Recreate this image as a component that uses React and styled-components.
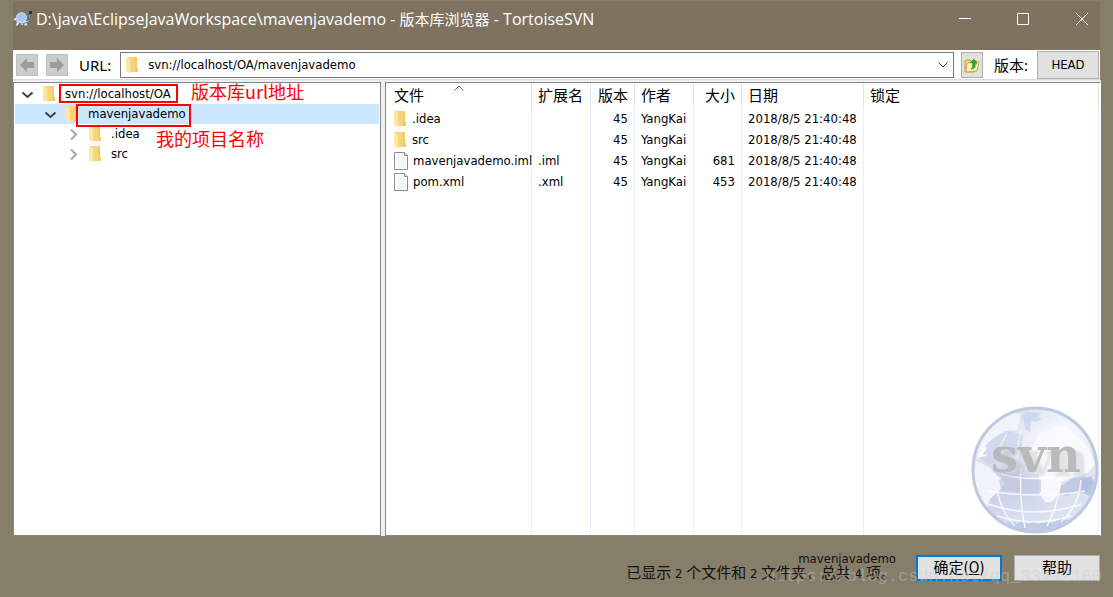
import React from "react";
import styled, { createGlobalStyle, css } from "styled-components";

const GlobalStyle = createGlobalStyle`
  * {
    box-sizing: border-box;
  }

  body {
    margin: 0;
    background: #877e6a;
    color: #000;
    font: 13px/20px "DejaVu Sans Condensed", "Noto Sans CJK SC", sans-serif;
  }

  button,
  input {
    margin: 0;
    padding: 0;
    font: inherit;
    color: inherit;
  }

  svg {
    display: block;
    flex: none;
  }
`;

const Window = styled.div`
  position: relative;
  display: flex;
  flex-direction: column;
  min-height: 100vh;
  padding: 1px 12px 0 13px;
`;

const TitleBar = styled.header`
  display: flex;
  align-items: flex-start;
  height: 49px;
  margin-right: 1px;
  background: #7f735f;
  color: #fff;
`;

const Title = styled.h1`
  display: flex;
  align-items: center;
  flex: 1;
  gap: 4px;
  height: 36px;
  margin: 0;
  font: 400 16px/20px "Open Sans", "Noto Sans CJK SC", sans-serif;
  white-space: nowrap;
`;

const TitleCjk = styled.span`
  font-size: 15px;
`;

const WindowButton = styled.button`
  display: flex;
  align-items: center;
  justify-content: center;
  width: 58px;
  height: 36px;
  border: 0;
  background: none;

  &:last-child {
    width: 48px;
    padding-left: 12px;
  }
`;

const Toolbar = styled.div`
  display: flex;
  align-items: center;
  height: 30px;
  margin-right: 1px;
  padding: 0 1px 0 3px;
  border-bottom: 1px solid #dcdcdc;
  background: #fff;
`;

const BigLabel = styled.label`
  font: 15px/20px "Noto Sans", "Noto Sans CJK SC", sans-serif;
  white-space: nowrap;
`;

const ToolButton = styled.button`
  display: flex;
  align-items: center;
  justify-content: center;
  width: 22px;
  height: ${(p) => p.$height || 22}px;
  border: 1px solid ${(p) => (p.disabled ? "#bfbfbf" : "#adadad")};
  background: ${(p) => (p.disabled ? "#ccc" : "#e1e1e1")};
`;

const NavButtons = styled.div`
  display: flex;
  gap: 8px;
  margin-right: 11px;
`;

const ComboBox = styled.div`
  display: flex;
  align-items: center;
  flex: 1;
  height: 26px;
  margin: 0 7px 0 9px;
  padding: 0 5px;
  border: 1px solid #7a7a7a;
  background: #fff;
`;

const UrlInput = styled.input`
  flex: 1;
  min-width: 0;
  margin-left: 8px;
  border: 0;
  outline: 0;
  background: none;
`;

const DropButton = styled.button`
  border: 0;
  background: none;
`;

const Revision = styled.div`
  display: flex;
  align-items: center;
  gap: 9px;
  margin-left: 11px;
`;

const PushButton = styled.button`
  width: ${(p) => p.$width}px;
  height: ${(p) => p.$height}px;
  border: 1px solid #adadad;
  background: #e1e1e1;
  font-size: ${(p) => (p.$large ? 15 : 13)}px;

  ${(p) =>
    p.$primary &&
    css`
      border: 2px solid #0078d7;
    `}
`;

const Panes = styled.main`
  display: grid;
  grid-template-columns: 368px 1fr;
  gap: 4px;
  flex: 1;
  padding-top: 2px;
  background: #f0eff0;
`;

const Pane = styled.section`
  position: relative;
  display: grid;
  align-content: ${(p) => (p.$stretch ? "stretch" : "start")};
  border: 1px solid #828790;
  border-right-color: ${(p) => (p.$stretch ? "#fff" : "#828790")};
  background: #fff;
`;

const Tree = styled.ul`
  margin: 0;
  padding: 1px;
  list-style: none;
`;

const TreeRow = styled.li`
  display: flex;
  align-items: center;
  height: 20px;
  padding-left: ${(p) => 6 + p.$level * 23}px;
  background: ${(p) => (p.$selected ? "#cce8ff" : "none")};
`;

const TreeLabel = styled.span`
  position: relative;
  margin-left: 8px;
`;

const TreeIcons = styled.span`
  display: flex;
  align-items: center;
  gap: 9px;
`;

// red outline drawn round a tree label, inset as top/right/bottom/left
const Mark = styled.span`
  position: absolute;
  inset: ${(p) => p.$inset};
  border: 2px solid #f00;
`;

const Note = styled.span`
  position: absolute;
  top: ${(p) => p.$top}px;
  left: ${(p) => p.$left}px;
  color: #f00;
  font: 18px/20px "Noto Sans CJK SC", sans-serif;
  white-space: nowrap;
`;

const Table = styled.table`
  width: 100%;
  height: 100%;
  padding-right: 1px;
  border-spacing: 0;
  table-layout: fixed;
`;

const HeadCell = styled.th`
  position: relative;
  height: 25px;
  padding: 0 6px;
  border-right: 1px solid #e5e5e5;
  font-size: 15px;
  font-weight: 400;
  text-align: ${(p) => p.$align || "left"};
  white-space: nowrap;

  &:first-child {
    padding-left: 8px;
  }
`;

const SortMark = styled.span`
  position: absolute;
  top: 2px;
  left: 50%;
  transform: translateX(-50%);
`;

const Cell = styled.td`
  height: ${(p) => (p.$fill ? "auto" : "21px")};
  padding: 0 6px;
  border-right: 1px solid #e8f1fb;
  text-align: ${(p) => p.$align || "left"};
  white-space: nowrap;

  &:first-child {
    padding: 0 0 0 8px;
  }
`;

const FileName = styled.span`
  display: flex;
  align-items: center;
  gap: 4px;
`;

const Globe = styled.div`
  position: absolute;
  right: 1px;
  bottom: 1px;
`;

const Footer = styled.footer`
  display: flex;
  justify-content: flex-end;
  align-items: flex-start;
  gap: 12px;
  height: 61px;
  padding: 19px 1px 0 0;
`;

const Status = styled.div`
  margin: -4px 8px 0 0;
  line-height: 15px;
  text-align: right;
  color: #111;
`;

const Summary = styled.div`
  font-size: 15px;
`;

const Count = styled.span`
  font-size: 13px;
`;

const Watermark = styled.span`
  position: absolute;
  right: 11px;
  bottom: 10px;
  color: rgba(205, 205, 205, 0.42);
  font: 17px/20px "Liberation Mono", monospace;
  pointer-events: none;
`;

const TurtleIcon = () => (
  <svg width="19" height="16" viewBox="0 0 19 16">
    <path d="M0 8l3-2 2 3-4 1zM4 10l3 1-2 4H2zM11 10l3 1 1 4h-4zM7 12h4l-1 3-2-1z" fill="#dfe6e6" stroke="#55636b" strokeWidth=".7" />
    <path d="M12 10c3 0 4-1 4-4l-1-2 2-3 1 2-1 4c0 3-2 5-5 5z" fill="#b7cdd6" stroke="#2c5166" strokeWidth=".7" />
    <ellipse cx="8.500" cy="6.500" rx="5" ry="4.800" fill="#a9c1ff" stroke="#dce7ff" strokeWidth=".8" />
    <path d="M3 10c3 2 8 2 11 0" fill="none" stroke="#ccd6da" strokeWidth="1.500" />
    <path d="M16 0h3v3h-2l-1 2z" fill="#123b59" />
  </svg>
);

const FolderIcon = () => (
  <svg width="14" height="18" viewBox="0 0 14 18">
    <path d="M1 1h10v11h1v4H1z" fill="#f6d479" />
    <path d="M9 1h2v11h1v4H9z" fill="#f2cb68" />
    <path d="M0 1l4 2v14.500L0 15z" fill="#ffe8a3" />
    <path d="M4 3v13" stroke="#fbdf92" />
  </svg>
);

const FileIcon = () => (
  <svg width="15" height="18" viewBox="0 0 15 18">
    <path d="M.5.500h10l3 3v14H.500z" fill="#fff" stroke="#8b8b8b" />
    <path d="M2 2h8v3h2v11H2z" fill="#f5f6f7" />
    <path d="M10.500.500v3h3" fill="#e6e6e6" stroke="#8b8b8b" />
  </svg>
);

const ArrowIcon = ({ back }) => (
  <svg width="16" height="16" viewBox="0 0 16 16">
    <path
      d={back ? "M1 8l7-7v4h7v6H8v4z" : "M15 8L8 1v4H1v6h7v4z"}
      fill="#9c9c9c"
    />
  </svg>
);

const Chevron = ({ open }) => (
  <svg width="13" height="13" viewBox="0 0 13 13" fill="none">
    {open ? (
      <path d="M1.500 4.500l5 4.500 5-4.500" stroke="#404040" strokeWidth="2" />
    ) : (
      <path d="M4 1.500l5 5-5 5" stroke="#a6a6a6" strokeWidth="2" />
    )}
  </svg>
);

const UpFolderIcon = () => (
  <svg width="16" height="16" viewBox="0 0 16 16">
    <path d="M1 4l1-1h4l1 1h6v9l-2 2H1z" fill="#f5d873" stroke="#c49b3c" />
    <path d="M3 6l12-1-2 9-11 1z" fill="#fff1ad" stroke="#d1a94d" />
    <path d="M7 12c4 0 5-3 4-6l2 1-3-5-4 4 2-1c1 3 1 5-1 7z" fill="#2fa83a" stroke="#208030" strokeWidth=".5" />
  </svg>
);

const SvnGlobe = () => (
  <svg width="128" height="128" viewBox="0 0 128 128" role="img" aria-label="svn">
    <defs>
      <linearGradient id="sea" x1="0" y1="0" x2="0.300" y2="1">
        <stop offset="0" stopColor="#cfd8ec" />
        <stop offset="0.350" stopColor="#e4e8f5" />
        <stop offset="0.620" stopColor="#c6cce4" />
        <stop offset="1" stopColor="#dde3f2" />
      </linearGradient>
      <radialGradient id="shine" cx="0.750" cy="0.320" r="0.500">
        <stop offset="0" stopColor="#fff" stopOpacity="0.950" />
        <stop offset="1" stopColor="#fff" stopOpacity="0" />
      </radialGradient>
      <filter id="shade" x="-20%" y="-20%" width="150%" height="150%">
        <feDropShadow dx="8" dy="4" stdDeviation="1" floodColor="#aaa" floodOpacity="0.300" />
      </filter>
      <clipPath id="ball">
        <circle cx="64" cy="64" r="61" />
      </clipPath>
    </defs>
    <circle cx="64" cy="64" r="62" fill="url(#sea)" />
    <g clipPath="url(#ball)">
      <circle cx="64" cy="64" r="62" fill="url(#shine)" />
      {/* north america and greenland */}
      <path d="M4 50C8 34 20 20 36 6L50 8 46 24 34 25 22 32 12 42z" fill="#fafbfe" opacity=".7" />
      <path d="M8 52C14 38 24 28 38 25l14 4-2 16-8 6-10 5-16 2z" fill="#ccd4ea" opacity=".7" />
      <path d="M50 10l6-4 14 1-3 4 4 2-6 3-5-1-1 12-5-4-1-8z" fill="#bfcbe4" opacity=".55" />
      {/* south america */}
      <path d="M2 54l8 3 8 4 10 10 6 6-6 8-9 8-2 8-6 2L4 84z" fill="#f1f3fa" />
      {/* europe and africa */}
      <path d="M68 28l10-4 12-6 14 10 14 14 6 16-8 10-12 2-14 6-4 14-6 6h-6l-6-10v-16l-8-6-4-12z" fill="#fafbfd" opacity=".9" />
      <path d="M90 80l12-8 12-2 8 6-6 12-14-2-6 4-8-2z" fill="#c3cbe4" />
      <path d="M110 74l10-4 6 10-8 10-6-4z" fill="#aebcdc" opacity=".7" />
      <path d="M28 74c8-4 12-6 24-4l18 4v12c-14 2-24 1-40-3z" fill="#c3c9e3" opacity=".7" />
      <path d="M34 119l6-4 6 3 5-3 6 3 6-3 4 3 8-3 6 2 8-4 9 1-8 14H40z" fill="#bfcbe5" />
      <g fill="none" stroke="#fff" strokeWidth="1.500" opacity=".8">
        <path d="M30 68q30 8 58 2M18 85q46 8 96 0M17 98q46 16 94 0M26 110q38 12 74 0" />
        <path d="M50 62q-2 30 4 60M90 70q-2 28-14 50M26 84q4 22 18 36M110 74q-2 26-20 42" />
        <path d="M28 42l8-14M50 24q-4 14-3 28" opacity=".7" />
      </g>
      <path d="M6 52c2-5 4-9 8-11l2 1-5 7 5-1-1 2-6 1z" fill="#fff" />
    </g>
    <circle cx="64" cy="64" r="62" fill="none" stroke="#bdc9e1" strokeWidth="3" />
    <text x="20" y="66" fill="#bababa" filter="url(#shade)" fontFamily="DejaVu Serif" fontWeight="700" fontSize="48">
      svn
    </text>
  </svg>
);

const tree = [
  { name: "svn://localhost/OA", level: 0, open: true, mark: "0 -7px 1px -6px" },
  { name: "mavenjavademo", level: 1, open: true, selected: true, mark: "0 -5px -3px -12px" },
  { name: ".idea", level: 2 },
  { name: "src", level: 2 },
];

const columns = [
  { title: "文件", width: 146, sorted: true },
  { title: "扩展名", width: 59 },
  { title: "版本", width: 44, align: "right" },
  { title: "作者", width: 59 },
  { title: "大小", width: 48, align: "right" },
  { title: "日期", width: 122 },
  { title: "锁定" },
];

const files = [
  { name: ".idea", folder: true },
  { name: "src", folder: true },
  { name: "mavenjavademo.iml", ext: ".iml", size: "681" },
  { name: "pom.xml", ext: ".xml", size: "453" },
];

const App = () => (
  <Window>
    <GlobalStyle />
    <TitleBar>
      <Title>
        <TurtleIcon />
        <span>
          D:\java\EclipseJavaWorkspace\mavenjavademo - <TitleCjk>版本库浏览器</TitleCjk> - TortoiseSVN
        </span>
      </Title>
      <WindowButton aria-label="最小化">
        <svg width="12" height="12"><path d="M0 5.500h12" stroke="#fff" /></svg>
      </WindowButton>
      <WindowButton aria-label="最大化">
        <svg width="12" height="12"><path d="M.5.500h11v11H.500z" fill="none" stroke="#fff" /></svg>
      </WindowButton>
      <WindowButton aria-label="关闭">
        <svg width="12" height="12"><path d="M0 0l12 12M12 0L0 12" stroke="#fff" /></svg>
      </WindowButton>
    </TitleBar>

    <Toolbar>
      <NavButtons>
        <ToolButton disabled aria-label="后退"><ArrowIcon back /></ToolButton>
        <ToolButton disabled aria-label="前进"><ArrowIcon /></ToolButton>
      </NavButtons>
      <BigLabel htmlFor="url">URL:</BigLabel>
      <ComboBox>
        <FolderIcon />
        <UrlInput id="url" defaultValue="svn://localhost/OA/mavenjavademo" />
        <DropButton aria-label="历史">
          <svg width="10" height="6"><path d="M.5.500L5 5 9.500.500" fill="none" stroke="#444" /></svg>
        </DropButton>
      </ComboBox>
      <ToolButton $height={26} aria-label="上一级"><UpFolderIcon /></ToolButton>
      <Revision>
        <BigLabel htmlFor="revision">版本:</BigLabel>
        <PushButton id="revision" $width={62} $height={28}>HEAD</PushButton>
      </Revision>
    </Toolbar>

    <Panes>
      <Pane>
        <Tree>
          {tree.map((node) => (
            <TreeRow key={node.name} $level={node.level} $selected={node.selected}>
              <TreeIcons>
                <Chevron open={node.open} />
                <FolderIcon />
              </TreeIcons>
              <TreeLabel>
                {node.name}
                {node.mark && <Mark $inset={node.mark} />}
              </TreeLabel>
            </TreeRow>
          ))}
        </Tree>
        <Note $top={-2} $left={177}>版本库url地址</Note>
        <Note $top={45} $left={142}>我的项目名称</Note>
      </Pane>

      <Pane $stretch>
        <Table>
          <colgroup>
            {columns.map((col) => (
              <col key={col.title} width={col.width} />
            ))}
          </colgroup>
          <thead>
            <tr>
              {columns.map((col) => (
                <HeadCell key={col.title} $align={col.align}>
                  {col.title}
                  {col.sorted && (
                    <SortMark>
                      <svg width="10" height="6"><path d="M.5 5.500L5 1l4.500 4.500" fill="none" stroke="#666" /></svg>
                    </SortMark>
                  )}
                </HeadCell>
              ))}
            </tr>
          </thead>
          <tbody>
            {files.map((file) => (
              <tr key={file.name}>
                <Cell>
                  <FileName>
                    {file.folder ? <FolderIcon /> : <FileIcon />}
                    {file.name}
                  </FileName>
                </Cell>
                <Cell>{file.ext}</Cell>
                <Cell $align="right">45</Cell>
                <Cell>YangKai</Cell>
                <Cell $align="right">{file.size}</Cell>
                <Cell>2018/8/5 21:40:48</Cell>
                <Cell />
              </tr>
            ))}
            <tr>
              {columns.map((col) => (
                <Cell key={col.title} $fill />
              ))}
            </tr>
          </tbody>
        </Table>
        <Globe>
          <SvnGlobe />
        </Globe>
      </Pane>
    </Panes>

    <Footer>
      <Status>
        <div>mavenjavademo</div>
        <Summary>
          已显示<Count> 2 </Count>个文件和<Count> 2 </Count>文件夹，总共<Count> 4 </Count>项。
        </Summary>
      </Status>
      <PushButton $primary $large $width={86} $height={26}>
        确定(<u>O</u>)
      </PushButton>
      <PushButton $large $width={86} $height={26}>帮助</PushButton>
    </Footer>
    <Watermark>https://blog.csdn.net/qq_33442160</Watermark>
  </Window>
);

export default App;
